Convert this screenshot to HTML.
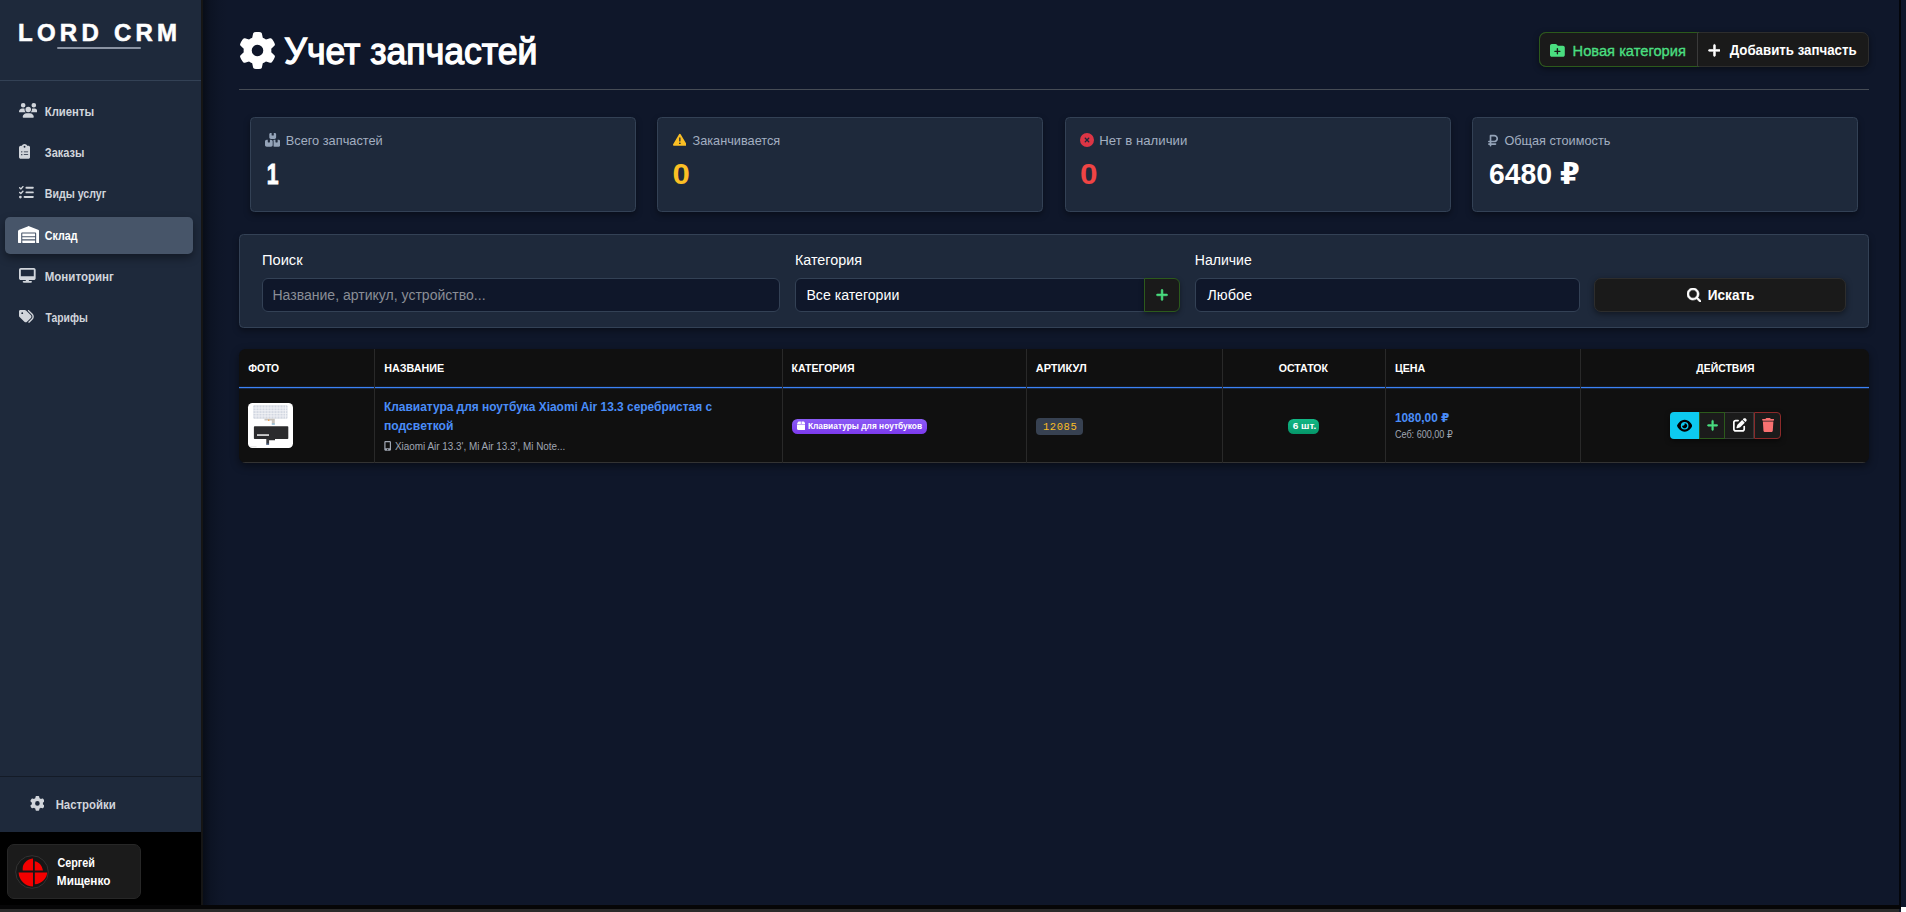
<!DOCTYPE html>
<html lang="ru">
<head>
<meta charset="utf-8">
<title>LORD CRM — Учет запчастей</title>
<style>
*{box-sizing:border-box;margin:0;padding:0}
html,body{width:1906px;height:912px;overflow:hidden}
body{background:#0f172a;color:#fff;font-family:"Liberation Sans","DejaVu Sans",sans-serif;font-size:14px;position:relative}
.abs{position:absolute}
svg{display:block;position:absolute}
.t{position:absolute;white-space:nowrap;transform-origin:0 50%;display:block}
/* ---------- sidebar ---------- */
#sb{position:absolute;left:0;top:0;width:201px;height:905px;background:#1e293b}
#sbedge{position:absolute;left:201px;top:0;width:2px;height:905px;background:#151515}
#sbshadow{position:absolute;left:203px;top:0;width:26px;height:905px;background:linear-gradient(90deg,rgba(3,6,12,.6),rgba(3,6,12,.22) 30%,rgba(3,6,12,.06) 65%,rgba(3,6,12,0))}
#logo{left:19px;top:17.8px;font-weight:700;font-size:24px;line-height:30px;letter-spacing:4.25px;color:#fff;-webkit-text-stroke:.55px #fff}
#logoline{position:absolute;left:57px;top:47px;width:84px;height:2px;background:#8a93a3;border-radius:1px}
.sbhr{position:absolute;left:0;width:201px;height:1px;background:#334155}
.nav{position:absolute;left:5px;width:188px;height:37px;border-radius:5px;color:#d1d5db;font-weight:700;font-size:13px;line-height:37px}
.nav .t{left:39.7px;top:0}
.nav.on{background:#475569;color:#fff;box-shadow:0 4px 8px rgba(0,0,0,.38)}
#userbar{position:absolute;left:0;top:832px;width:201px;height:73px;background:#000}
#usercard{position:absolute;left:7px;top:12px;width:134px;height:55px;background:#1b1b1b;border:1px solid #272727;border-radius:7px}
#usercard .t{font-weight:700;font-size:13px;line-height:18px;color:#fff}
/* ---------- main ---------- */
#h1{left:283px;top:29.7px;font-size:36px;line-height:44px;font-weight:400;color:#fff;-webkit-text-stroke:1.3px #fff}
#hr{position:absolute;left:239px;top:89px;width:1630px;height:1px;background:#464c55}
#btns{position:absolute;left:1539px;top:32px;width:330px;height:35px;background:#1a1a1a;border:1px solid #2d2d2d;border-radius:7px;box-shadow:0 2px 6px rgba(0,0,0,.45);font-size:14px;line-height:33px}
#btns .b1{position:absolute;left:-1px;top:-1px;width:160px;height:35px;border:1px solid #2c5a1c;border-right:0;border-radius:7px 0 0 7px;color:#4ade80}
#btns .b2{position:absolute;left:157px;top:-1px;width:171px;height:35px;border-left:1px solid #3a3a3a;color:#fff;font-weight:700}
.stat{position:absolute;top:117px;width:386px;height:95px;background:#1e293b;border:1px solid #334155;border-radius:4.5px;box-shadow:0 3px 6px rgba(0,0,0,.36)}
.stat .lb{top:14px;font-size:13px;line-height:18px;color:#a3afc1}
.stat .vl{top:38px;font-size:29.5px;line-height:36px;font-weight:700}
#filt{position:absolute;left:239px;top:234px;width:1630px;height:94px;background:#1e293b;border:1px solid #334155;border-radius:4.5px;box-shadow:0 3px 6px rgba(0,0,0,.36)}
.flb{top:16px;font-size:14px;line-height:18px;color:#fff}
.fin{position:absolute;top:43px;height:34px;background:#0f172a;border:1px solid #334155;border-radius:6px;font-size:14px;line-height:32px;color:#fff}
.fin .t{top:0}
/* ---------- table ---------- */
#tbl{position:absolute;left:239px;top:349px;width:1630px;height:114px;background:#101010;border-radius:6.5px;box-shadow:0 3px 8px rgba(0,0,0,.45);overflow:hidden}
#tbl .th{top:0;font-size:11.5px;line-height:38px;font-weight:700;color:#fff}
#tbl .vl{position:absolute;top:0;width:1px;height:114px;background:#292929}
#tbl .bl{position:absolute;left:0;top:37px;width:1630px;height:3px;background:linear-gradient(180deg,rgba(59,130,246,.1) 0,rgba(59,130,246,.1) 1px,#3b82f6 1px,#3b82f6 2px,rgba(59,130,246,.22) 2px,rgba(59,130,246,.22) 3px)}
#tbl .bb{position:absolute;left:0;top:113px;width:1630px;height:1px;background:#333}
#thumb{position:absolute;left:9px;top:54px;width:45px;height:45px;border-radius:4.5px;background:#fff;overflow:hidden}
.lnk{font-size:13px;line-height:19px;font-weight:700;color:#4a8df8}
.sub{font-size:10px;line-height:14px;color:#a0a7b3}
#catb{position:absolute;left:553px;top:70px;width:135px;height:15px;border-radius:5.5px;background:linear-gradient(180deg,#8b5cf6,#7c3aed);font-size:9.5px;line-height:15px;font-weight:700;color:#fff}
#art{position:absolute;left:797px;top:69px;width:47px;height:17px;border-radius:4px;background:#374151;font-family:"Liberation Mono","DejaVu Sans Mono",monospace;font-size:10.5px;line-height:17px;color:#fbbf24}
#stk{position:absolute;left:1049px;top:70px;width:31px;height:15px;border-radius:5.5px;background:linear-gradient(180deg,#12b886,#059669);font-size:9.5px;line-height:15px;font-weight:700;color:#fff}
#acts{position:absolute;left:1431px;top:63px;width:111px;height:27px;border-radius:4px;box-shadow:0 2px 5px rgba(0,0,0,.5)}
#acts div{position:absolute;top:0;height:27px}
/* per-text width calibration */
#n1{transform:translateX(-0.26px) scaleX(0.8696)}
#n2{transform:translateX(-0.25px) scaleX(0.8457)}
#n3{transform:translateX(-0.24px) scaleX(0.8160)}
#n4{transform:translateX(-0.24px) scaleX(0.8225)}
#n5{transform:translateX(-0.26px) scaleX(0.8859)}
#n6{transform:translateX(0.46px) scaleX(0.7944)}
#n7{transform:translateX(-0.36px) scaleX(0.8750)}
#u1{transform:translateX(0.42px) scaleX(0.8304)}
#u2{transform:translateX(-0.15px) scaleX(0.9051)}
#logo{transform:translateX(-1.00px) scaleX(1.0000)}
#h1{transform:translateX(1.29px) scaleX(0.9887)}
#b1t{transform:translateX(-0.40px) scaleX(1.0472)}
#b2t{transform:translateX(0.65px) scaleX(0.9489)}
#s1l{transform:translateX(-1.28px) scaleX(0.9825)}
#s1v{transform:translateX(0.78px) scaleX(0.7188)}
#s2l{transform:translateX(-0.50px) scaleX(0.9787)}
#s2v{transform:translateX(-0.45px) scaleX(1.0533)}
#s3l{transform:translateX(-1.71px) scaleX(1.0129)}
#s3v{transform:translateX(-1.07px) scaleX(1.0667)}
#s4l{transform:translateX(-0.60px) scaleX(0.9778)}
#s4v{transform:translateX(0.90px) scaleX(0.9617)}
#f1l{transform:translateX(0.00px) scaleX(1.0462)}
#f1t{transform:translateX(-1.60px) scaleX(1.0028)}
#f2l{transform:translateX(-0.10px) scaleX(1.0246)}
#f2t{transform:translateX(-0.60px) scaleX(1.0098)}
#f3l{transform:translateX(-0.20px) scaleX(1.0018)}
#f3t{transform:translateX(0.34px) scaleX(1.0364)}
#f4t{transform:translateX(-0.20px) scaleX(0.9688)}
#h1t{transform:translateX(0.20px) scaleX(0.8971)}
#h2t{transform:translateX(0.30px) scaleX(0.9344)}
#h3t{transform:translateX(0.50px) scaleX(0.9130)}
#h4t{transform:translateX(-0.30px) scaleX(0.9566)}
#h5t{transform:translateX(-0.30px) scaleX(0.9185)}
#h6t{transform:translateX(-0.10px) scaleX(0.9303)}
#h7t{transform:translateX(1.31px) scaleX(0.9077)}
#r1a{transform:translateX(0.00px) scaleX(0.9171)}
#r1b{transform:translateX(0.00px) scaleX(0.9324)}
#r1c{transform:translateX(0.00px) scaleX(0.9890)}
#cbt{transform:translateX(-1.08px) scaleX(0.8797)}
#art_t{transform:translateX(-1.10px) scaleX(1.0000)}
#stk_t{transform:translateX(-1.36px) scaleX(1.0632)}
#p1{transform:translateX(-0.10px) scaleX(0.9119)}
#p2{transform:translateX(-0.10px) scaleX(0.9078)}
</style>
</head>
<body>

<!-- ================= SIDEBAR ================= -->
<div id="sb">
  <div id="logo" class="t">LORD CRM</div>
  <div id="logoline"></div>
  <div class="sbhr" style="top:80px"></div>

  <div class="nav" style="top:93.6px"><svg width="18.50" height="14.80" viewBox="0 0 640 512" fill="currentColor" style="left:13.9px;top:9.6px"><path d="M144 0a80 80 0 1 1 0 160A80 80 0 1 1 144 0zM512 0a80 80 0 1 1 0 160A80 80 0 1 1 512 0zM0 298.700C0 239.800 47.800 192 106.700 192h42.700c15.900 0 31 3.500 44.600 9.700c-1.300 7.200-1.900 14.700-1.900 22.300c0 38.200 16.800 72.500 43.300 96c-.2 0-.4 0-.7 0H21.300C9.600 320 0 310.400 0 298.700zM405.300 320c-.2 0-.4 0-.7 0c26.600-23.500 43.300-57.800 43.300-96c0-7.600-.7-15-1.900-22.300c13.600-6.300 28.700-9.700 44.600-9.700h42.700C592.200 192 640 239.800 640 298.700c0 11.800-9.600 21.300-21.300 21.300H405.300zM224 224a96 96 0 1 1 192 0 96 96 0 1 1 -192 0zM128 485.300C128 411.700 187.700 352 261.300 352H378.700C452.300 352 512 411.700 512 485.300c0 14.700-11.900 26.700-26.700 26.700H154.700c-14.700 0-26.700-11.900-26.700-26.700z"/></svg><span class="t" id="n1" style="top:-.5px">Клиенты</span></div>
  <div class="nav" style="top:134.7px"><svg width="11.10" height="14.80" viewBox="0 0 384 512" fill="currentColor" style="left:14px;top:9.6px"><path d="M192 0c-41.800 0-77.400 26.700-90.500 64H64C28.700 64 0 92.700 0 128V448c0 35.300 28.700 64 64 64H320c35.300 0 64-28.700 64-64V128c0-35.300-28.700-64-64-64H282.500C269.400 26.700 233.800 0 192 0zm0 64a32 32 0 1 1 0 64 32 32 0 1 1 0-64zM72 272a24 24 0 1 1 48 0 24 24 0 1 1 -48 0zm104-16H304c8.800 0 16 7.200 16 16s-7.200 16-16 16H176c-8.800 0-16-7.200-16-16s7.200-16 16-16zM72 368a24 24 0 1 1 48 0 24 24 0 1 1 -48 0zm88 0c0-8.800 7.200-16 16-16H304c8.800 0 16 7.200 16 16s-7.200 16-16 16H176c-8.800 0-16-7.200-16-16z"/></svg><span class="t" id="n2" style="top:-.5px">Заказы</span></div>
  <div class="nav" style="top:175.9px"><svg width="14.80" height="14.80" viewBox="0 0 512 512" fill="currentColor" style="left:13.9px;top:9.6px"><path d="M152.100 38.200c9.900 8.900 10.700 24 1.800 33.900l-72 80c-4.400 4.900-10.600 7.800-17.200 7.900s-12.900-2.400-17.600-7L7 113C-2.300 103.600-2.300 88.400 7 79s24.600-9.400 33.900 0l22.100 22.100 55.100-61.200c8.900-9.900 24-10.700 33.900-1.800zm0 160c9.900 8.900 10.700 24 1.800 33.900l-72 80c-4.400 4.900-10.600 7.800-17.200 7.900s-12.900-2.400-17.600-7L7 273c-9.400-9.400-9.400-24.600 0-33.900s24.600-9.400 33.900 0l22.100 22.100 55.100-61.200c8.900-9.900 24-10.700 33.900-1.800zM224 96c0-17.700 14.300-32 32-32H480c17.700 0 32 14.300 32 32s-14.300 32-32 32H256c-17.700 0-32-14.300-32-32zm0 160c0-17.700 14.300-32 32-32H480c17.700 0 32 14.300 32 32s-14.300 32-32 32H256c-17.700 0-32-14.300-32-32zM160 416c0-17.700 14.300-32 32-32H480c17.700 0 32 14.300 32 32s-14.300 32-32 32H192c-17.700 0-32-14.300-32-32zM48 368a48 48 0 1 1 0 96 48 48 0 1 1 0-96z"/></svg><span class="t" id="n3" style="top:-.5px">Виды услуг</span></div>
  <div class="nav on" style="top:217px"><svg width="21.38" height="17.10" viewBox="0 0 640 512" fill="currentColor" style="left:12.9px;top:9.3px"><path d="M0 488V171.300c0-26.200 15.900-49.700 40.200-59.400L308.100 4.800c7.600-3.100 16.100-3.100 23.800 0L599.800 111.900c24.300 9.700 40.200 33.300 40.200 59.400V488c0 13.300-10.700 24-24 24H568c-13.300 0-24-10.700-24-24V224c0-17.700-14.300-32-32-32H128c-17.700 0-32 14.300-32 32V488c0 13.300-10.700 24-24 24H24c-13.300 0-24-10.700-24-24zm488 24l-336 0c-13.300 0-24-10.700-24-24V432H512l0 56c0 13.300-10.700 24-24 24zM128 400V336H512v64H128zm0-96V224H512l0 80H128z"/></svg><span class="t" id="n4">Склад</span></div>
  <div class="nav" style="top:258.1px"><svg width="16.65" height="14.80" viewBox="0 0 576 512" fill="currentColor" style="left:14px;top:9.9px"><path d="M64 0C28.700 0 0 28.700 0 64V352c0 35.300 28.700 64 64 64H240l-10.700 32H160c-17.700 0-32 14.300-32 32s14.300 32 32 32H416c17.700 0 32-14.300 32-32s-14.300-32-32-32H346.700L336 416H512c35.300 0 64-28.700 64-64V64c0-35.300-28.700-64-64-64H64zM512 64V288H64V64H512z"/></svg><span class="t" id="n5">Мониторинг</span></div>
  <div class="nav" style="top:299.3px"><svg width="14.80" height="14.80" viewBox="0 0 512 512" fill="currentColor" style="left:13.9px;top:9.6px"><path d="M345 39.100L472.800 168.400c52.400 53 52.400 138.200 0 191.200L360.800 472.900c-9.300 9.400-24.500 9.500-33.900 .2s-9.500-24.500-.2-33.900L438.600 325.900c33.900-34.300 33.900-89.400 0-123.700L310.900 72.900c-9.300-9.400-9.200-24.600 .2-33.900s24.600-9.200 33.900 .2zM0 229.500V80C0 53.500 21.500 32 48 32H197.500c17 0 33.300 6.700 45.300 18.700l168 168c25 25 25 65.500 0 90.500L277.300 442.800c-25 25-65.500 25-90.500 0l-168-168C6.700 262.700 0 246.500 0 229.500zM144 144a32 32 0 1 0 -64 0 32 32 0 1 0 64 0z"/></svg><span class="t" id="n6">Тарифы</span></div>

  <div class="sbhr" style="top:776px;background:#141b27"></div>
  <div class="nav" style="top:785.5px;left:16px;width:170px"><svg width="14.80" height="14.80" viewBox="0 0 512 512" fill="currentColor" style="left:13.5px;top:10.8px"><path d="M495.900 166.600c3.200 8.700 .5 18.400-6.400 24.600l-43.300 39.400c1.100 8.300 1.700 16.800 1.700 25.400s-.6 17.100-1.700 25.400l43.300 39.400c6.900 6.200 9.600 15.900 6.400 24.600c-4.400 11.900-9.700 23.300-15.800 34.300l-4.700 8.100c-6.600 11-14 21.400-22.100 31.200c-5.900 7.200-15.700 9.600-24.500 6.800l-55.700-17.700c-13.400 10.300-28.200 18.900-44 25.400l-12.500 57.100c-2 9.100-9 16.300-18.200 17.800c-13.800 2.300-28 3.500-42.500 3.500s-28.700-1.200-42.500-3.500c-9.200-1.500-16.200-8.700-18.200-17.800l-12.500-57.100c-15.800-6.500-30.600-15.100-44-25.400L83.100 425.900c-8.800 2.800-18.600 .3-24.500-6.800c-8.100-9.800-15.500-20.200-22.100-31.200l-4.700-8.100c-6.100-11-11.400-22.400-15.800-34.300c-3.200-8.700-.5-18.400 6.400-24.600l43.300-39.400C64.600 273.100 64 264.600 64 256s.6-17.100 1.700-25.400L22.400 191.200c-6.900-6.200-9.600-15.900-6.400-24.600c4.400-11.900 9.700-23.300 15.800-34.300l4.700-8.100c6.600-11 14-21.400 22.100-31.200c5.900-7.200 15.700-9.600 24.500-6.800l55.700 17.700c13.400-10.300 28.200-18.900 44-25.400l12.500-57.100c2-9.100 9-16.300 18.200-17.800C227.300 1.200 241.500 0 256 0s28.700 1.200 42.500 3.500c9.200 1.500 16.200 8.700 18.200 17.800l12.500 57.100c15.800 6.500 30.600 15.100 44 25.400l55.700-17.700c8.800-2.800 18.600-.3 24.500 6.800c8.100 9.800 15.500 20.200 22.100 31.200l4.700 8.100c6.100 11 11.400 22.400 15.800 34.300zM256 336a80 80 0 1 0 0-160 80 80 0 1 0 0 160z"/></svg><span class="t" id="n7">Настройки</span></div>

  <div id="userbar">
    <div id="usercard">
      <svg width="34" height="34" viewBox="0 0 34 34" style="left:7px;top:9.5px">
        <circle cx="17" cy="17" r="16.3" fill="#161616" stroke="#333" stroke-width="1"/>
        <g fill="#f40000">
          <path d="M18 15.6V3.4l-1.6.3A11.5 11.5 0 0 0 8.6 9.5c-.6 1-1 3-.9 6.1z"/>
          <path d="M19.8 15.6V6.2c3.2.3 6.6 3.3 7.6 7.2l.6 2.2z"/>
          <path d="M18 17.4v14.2C10.5 31.2 4 25.5 3.6 17.4z"/>
          <path d="M19.8 17.4h12.4c-.2 5.7-5.2 11.3-12.4 11.8z"/>
        </g>
      </svg>
      <span class="t" id="u1" style="left:48.5px;top:9px">Сергей</span>
      <span class="t" id="u2" style="left:48.5px;top:27px">Мищенко</span>
    </div>
  </div>
</div>
<div id="sbedge"></div>
<div id="sbshadow"></div>

<!-- ================= MAIN ================= -->
<svg width="37.00" height="37.00" viewBox="0 0 512 512" fill="currentColor" style="left:238.5px;top:31.8px"><path d="M495.900 166.600c3.200 8.700 .5 18.400-6.400 24.600l-43.300 39.400c1.100 8.300 1.700 16.800 1.700 25.400s-.6 17.100-1.700 25.400l43.300 39.400c6.900 6.200 9.600 15.900 6.400 24.600c-4.400 11.900-9.700 23.300-15.800 34.300l-4.700 8.100c-6.600 11-14 21.400-22.100 31.200c-5.900 7.200-15.700 9.600-24.500 6.800l-55.700-17.700c-13.400 10.300-28.200 18.900-44 25.400l-12.500 57.100c-2 9.100-9 16.300-18.200 17.800c-13.800 2.300-28 3.500-42.500 3.500s-28.700-1.200-42.500-3.500c-9.200-1.500-16.200-8.700-18.200-17.800l-12.500-57.100c-15.800-6.500-30.600-15.100-44-25.400L83.100 425.900c-8.800 2.800-18.600 .3-24.500-6.800c-8.100-9.800-15.500-20.200-22.100-31.200l-4.700-8.100c-6.100-11-11.400-22.400-15.800-34.300c-3.200-8.700-.5-18.400 6.400-24.600l43.300-39.400C64.600 273.100 64 264.600 64 256s.6-17.100 1.700-25.400L22.400 191.200c-6.900-6.200-9.600-15.900-6.400-24.600c4.400-11.900 9.700-23.300 15.800-34.300l4.700-8.100c6.600-11 14-21.400 22.100-31.200c5.900-7.200 15.700-9.600 24.500-6.800l55.700 17.700c13.400-10.300 28.200-18.900 44-25.400l12.500-57.100c2-9.100 9-16.300 18.200-17.800C227.300 1.200 241.500 0 256 0s28.700 1.200 42.500 3.500c9.200 1.500 16.200 8.700 18.200 17.800l12.500 57.100c15.800 6.500 30.600 15.100 44 25.400l55.700-17.700c8.800-2.800 18.600-.3 24.500 6.800c8.100 9.800 15.500 20.200 22.100 31.200l4.700 8.100c6.100 11 11.400 22.400 15.800 34.300zM256 336a80 80 0 1 0 0-160 80 80 0 1 0 0 160z"/></svg>
<div id="h1" class="t">Учет запчастей</div>
<div id="hr"></div>

<div id="btns">
  <div class="b1"><svg width="14.80" height="14.80" viewBox="0 0 512 512" fill="currentColor" style="left:9.8px;top:9.5px"><path d="M512 416c0 35.300-28.700 64-64 64H64c-35.300 0-64-28.700-64-64V96C0 60.700 28.700 32 64 32H192c20.100 0 39.100 9.500 51.200 25.600l19.200 25.600c6 8.100 15.500 12.800 25.600 12.800H448c35.300 0 64 28.700 64 64V416zM232 376c0 13.300 10.700 24 24 24s24-10.700 24-24V312h64c13.300 0 24-10.700 24-24s-10.700-24-24-24H280V200c0-13.300-10.700-24-24-24s-24 10.700-24 24v64H168c-13.300 0-24 10.700-24 24s10.700 24 24 24h64v64z"/></svg><span class="t" id="b1t" style="left:33px;top:1.8px;-webkit-text-stroke:.35px #4ade80">Новая категория</span></div>
  <div class="b2"><svg width="12.95" height="14.80" viewBox="0 0 448 512" fill="currentColor" style="left:9.5px;top:10.9px"><path stroke="currentColor" stroke-width="22" d="M256 80c0-17.700-14.300-32-32-32s-32 14.300-32 32V224H48c-17.700 0-32 14.300-32 32s14.300 32 32 32H192V432c0 17.700 14.300 32 32 32s32-14.300 32-32V288H400c17.700 0 32-14.300 32-32s-14.300-32-32-32H256V80z"/></svg><span class="t" id="b2t" style="left:31px;top:2px">Добавить запчасть</span></div>
</div>

<div class="stat" style="left:250px"><svg width="15.41" height="13.70" viewBox="0 0 576 512" fill="currentColor" style="left:13.8px;top:15.2px;color:#94a3b8"><path d="M248 0H208c-26.500 0-48 21.500-48 48V160c0 35.300 28.700 64 64 64H352c35.300 0 64-28.700 64-64V48c0-26.500-21.500-48-48-48H328V80c0 8.800-7.200 16-16 16H264c-8.800 0-16-7.200-16-16V0zM64 256c-35.300 0-64 28.700-64 64V448c0 35.300 28.700 64 64 64H224c35.300 0 64-28.700 64-64V320c0-35.300-28.700-64-64-64H184v80c0 8.800-7.200 16-16 16H120c-8.800 0-16-7.200-16-16V256H64zM352 512H512c35.300 0 64-28.700 64-64V320c0-35.300-28.700-64-64-64H472v80c0 8.800-7.200 16-16 16H408c-8.800 0-16-7.200-16-16V256H352c-15 0-28.800 5.100-39.700 13.800c4.900 10.400 7.700 22 7.700 34.200V464c0 12.200-2.800 23.800-7.700 34.200C323.200 506.900 337 512 352 512z"/></svg><span class="t lb" id="s1l" style="left:36px">Всего запчастей</span><span class="t vl" id="s1v" style="left:15px;color:#fff;-webkit-text-stroke:.9px #fff">1</span></div>
<div class="stat" style="left:657px"><svg width="13.70" height="13.70" viewBox="0 0 512 512" fill="currentColor" style="left:14.7px;top:15px;color:#fbbf24"><path d="M256 32c14.200 0 27.300 7.500 34.500 19.800l216 368c7.300 12.400 7.300 27.700 .2 40.100S486.300 480 472 480H40c-14.300 0-27.600-7.700-34.700-20.100s-7-27.800 .2-40.100l216-368C228.700 39.500 241.800 32 256 32zm0 128c-13.300 0-24 10.700-24 24V296c0 13.300 10.700 24 24 24s24-10.700 24-24V184c0-13.300-10.700-24-24-24zm32 224a32 32 0 1 0 -64 0 32 32 0 1 0 64 0z"/></svg><span class="t lb" id="s2l" style="left:35px">Заканчивается</span><span class="t vl" id="s2v" style="left:15px;color:#fbbf24">0</span></div>
<div class="stat" style="left:1065px"><svg width="14.00" height="14.00" viewBox="0 0 512 512" fill="currentColor" style="left:14px;top:15px;color:#dc3545"><path d="M256 512A256 256 0 1 0 256 0a256 256 0 1 0 0 512zM175 175c9.400-9.400 24.600-9.400 33.900 0l47 47 47-47c9.400-9.400 24.600-9.400 33.900 0s9.400 24.600 0 33.900l-47 47 47 47c9.400 9.400 9.400 24.600 0 33.900s-24.600 9.400-33.900 0l-47-47-47 47c-9.400 9.400-24.600 9.400-33.900 0s-9.400-24.600 0-33.900l47-47-47-47c-9.400-9.400-9.400-24.600 0-33.900z"/></svg><span class="t lb" id="s3l" style="left:35px">Нет в наличии</span><span class="t vl" id="s3v" style="left:15px;color:#ef4444">0</span></div>
<div class="stat" style="left:1472px"><svg width="10.05" height="13.40" viewBox="0 0 384 512" fill="currentColor" style="left:14.7px;top:15.6px;color:#94a3b8"><path d="M96 32C78.300 32 64 46.300 64 64V256H32c-17.700 0-32 14.300-32 32s14.300 32 32 32H64v32H32c-17.700 0-32 14.300-32 32s14.300 32 32 32H64v32c0 17.700 14.300 32 32 32s32-14.300 32-32V416H288c17.700 0 32-14.300 32-32s-14.300-32-32-32H128V320H240c79.500 0 144-64.500 144-144s-64.500-144-144-144H96zM240 256H128V96H240c44.200 0 80 35.800 80 80s-35.800 80-80 80z"/></svg><span class="t lb" id="s4l" style="left:32px">Общая стоимость</span><span class="t vl" id="s4v" style="left:15px;color:#fff">6480 ₽</span></div>

<div id="filt">
  <span class="t flb" id="f1l" style="left:22px">Поиск</span>
  <div class="fin" style="left:22px;width:518px;color:#8a8e96"><span class="t" id="f1t" style="left:11px">Название, артикул, устройство...</span></div>
  <span class="t flb" id="f2l" style="left:555px">Категория</span>
  <div class="fin" style="left:555px;width:351px;border-radius:6px 0 0 6px"><span class="t" id="f2t" style="left:11px">Все категории</span></div>
  <div class="abs" style="left:904px;top:43px;width:36px;height:34px;background:#1a1a1a;border:1px solid #2c5a1c;border-radius:0 6px 6px 0;box-shadow:0 2px 5px rgba(0,0,0,.4)"><svg width="12.08" height="13.80" viewBox="0 0 448 512" fill="currentColor" style="left:11px;top:8.6px;color:#4ade80"><path stroke="currentColor" stroke-width="22" d="M256 80c0-17.700-14.300-32-32-32s-32 14.300-32 32V224H48c-17.700 0-32 14.300-32 32s14.300 32 32 32H192V432c0 17.700 14.300 32 32 32s32-14.300 32-32V288H400c17.700 0 32-14.300 32-32s-14.300-32-32-32H256V80z"/></svg></div>
  <span class="t flb" id="f3l" style="left:955px">Наличие</span>
  <div class="fin" style="left:955px;width:385px"><span class="t" id="f3t" style="left:11px">Любое</span></div>
  <div class="abs" style="left:1354px;top:43px;width:252px;height:34px;background:#1a1a1a;border:1px solid #2d2d2d;border-radius:7px;box-shadow:0 2px 6px rgba(0,0,0,.45);font-size:14px;line-height:32px;font-weight:700"><svg width="14.80" height="14.80" viewBox="0 0 512 512" fill="currentColor" style="left:91.5px;top:8.7px"><path stroke="currentColor" stroke-width="22" d="M416 208c0 45.900-14.900 88.300-40 122.700L502.600 457.400c12.500 12.500 12.500 32.800 0 45.300s-32.800 12.500-45.300 0L330.700 376c-34.400 25.200-76.800 40-122.700 40C93.100 416 0 322.900 0 208S93.100 0 208 0S416 93.100 416 208zM208 352a144 144 0 1 0 0-288 144 144 0 1 0 0 288z"/></svg><span class="t" id="f4t" style="left:113px;top:0">Искать</span></div>
</div>

<div id="tbl">
  <div class="bl"></div>
  <div class="bb"></div>
  <div class="vl" style="left:135px"></div>
  <div class="vl" style="left:543px"></div>
  <div class="vl" style="left:787px"></div>
  <div class="vl" style="left:983px"></div>
  <div class="vl" style="left:1146px"></div>
  <div class="vl" style="left:1341px"></div>
  <span class="t th" id="h1t" style="left:9px">ФОТО</span>
  <span class="t th" id="h2t" style="left:145px">НАЗВАНИЕ</span>
  <span class="t th" id="h3t" style="left:552px">КАТЕГОРИЯ</span>
  <span class="t th" id="h4t" style="left:797px">АРТИКУЛ</span>
  <span class="t th" id="h5t" style="left:1040px">ОСТАТОК</span>
  <span class="t th" id="h6t" style="left:1156px">ЦЕНА</span>
  <span class="t th" id="h7t" style="left:1456px">ДЕЙСТВИЯ</span>

  <div id="thumb">
    <svg width="45" height="45" viewBox="0 0 45 45" style="left:0;top:0">
      <rect x="5.3" y="2.3" width="34.2" height="13.4" rx="1" fill="#d2d7e1"/>
      <g stroke="#fff" stroke-width=".8" opacity=".75"><path d="M5.3 5h34.2M5.3 7.7h34.2M5.3 10.4h34.2M5.3 13h34.2"/><path d="M8 2.3v13.4M11 2.3v13.4M14 2.3v13.4M17 2.3v13.4M20 2.3v13.4M23 2.3v13.4M26 2.3v13.4M29 2.3v13.4M32 2.3v13.4M35 2.3v13.4M37.5 2.3v13.4"/></g>
      <path d="M16.5 15.7h10.3v5.7h-3v-4h-7.3z" fill="#c9c4bd"/><rect x="20" y="16.6" width="1.4" height="1.3" fill="#f59e42"/><rect x="23.8" y="20.6" width="3" height=".9" fill="#6cb6e6"/>
      <rect x="5.9" y="23.3" width="34.4" height="12.8" rx=".8" fill="#2b2b2d"/>
      <rect x="9" y="31.3" width="12" height="1.5" fill="#f3f3f3"/>
      <path d="M18.3 36.1h2.8v5.6h-2.8z" fill="#3a3a3e"/><path d="M21 36.1h6v1.2h-6z" fill="#2b2b2d"/><rect x="18.5" y="40.6" width="2.4" height="1" fill="#5a7fb5"/>
      <rect x="2.5" y="43.3" width="6" height="1" fill="#e3e3e3"/>
    </svg>
  </div>

  <span class="t lnk" id="r1a" style="left:145px;top:48px">Клавиатура для ноутбука Xiaomi Air 13.3 серебристая с</span>
  <span class="t lnk" id="r1b" style="left:145px;top:67px">подсветкой</span>
  <svg width="7.35" height="9.80" viewBox="0 0 384 512" fill="currentColor" style="left:145px;top:92px;color:#a0a7b3"><path d="M16 64C16 28.700 44.700 0 80 0H304c35.300 0 64 28.700 64 64V448c0 35.300-28.700 64-64 64H80c-35.300 0-64-28.700-64-64V64zM224 448a32 32 0 1 0 -64 0 32 32 0 1 0 64 0zM304 64H80V384H304V64z"/></svg>
  <span class="t sub" id="r1c" style="left:156px;top:91px">Xiaomi Air 13.3', Mi Air 13.3', Mi Note...</span>

  <div id="catb"><svg width="8.40" height="9.60" viewBox="0 0 448 512" fill="currentColor" style="left:5px;top:1.7px"><path d="M50.700 58.500L0 160H208V32H93.700C75.500 32 58.900 42.300 50.700 58.500zM240 160H448L397.300 58.500C389.100 42.300 372.500 32 354.300 32H240V160zm208 32H0V416c0 35.300 28.700 64 64 64H384c35.300 0 64-28.700 64-64V192z"/></svg><span class="t" id="cbt" style="left:17px;top:-1px">Клавиатуры для ноутбуков</span></div>
  <div id="art"><span class="t" id="art_t" style="left:8px;top:.8px;letter-spacing:.6px">12085</span></div>
  <div id="stk"><span class="t" id="stk_t" style="left:6px;top:-1px">6 шт.</span></div>
  <span class="t lnk" id="p1" style="left:1156px;top:60px;line-height:18px">1080,00 ₽</span>
  <span class="t sub" id="p2" style="left:1156px;top:79px">Себ: 600,00 ₽</span>

  <div id="acts">
    <div style="left:0;width:29px;background:#0dcaf0;border-radius:4px 0 0 4px"><svg width="15.30" height="13.60" viewBox="0 0 576 512" fill="currentColor" style="left:7px;top:6.8px;color:#000"><path d="M288 32c-80.800 0-145.500 36.800-192.600 80.600C48.600 156 17.300 208 2.500 243.700c-3.300 7.900-3.300 16.700 0 24.600C17.300 304 48.600 356 95.400 399.400C142.500 443.200 207.200 480 288 480s145.500-36.800 192.600-80.600c46.800-43.500 78.100-95.400 93-131.100c3.300-7.900 3.300-16.700 0-24.600c-14.900-35.700-46.200-87.700-93-131.100C433.500 68.800 368.800 32 288 32zM144 256a144 144 0 1 1 288 0 144 144 0 1 1 -288 0zm144-64c0 35.300-28.700 64-64 64c-7.100 0-13.900-1.200-20.300-3.300c-5.500-1.800-11.900 1.600-11.700 7.400c.3 6.900 1.300 13.800 3.200 20.700c13.700 51.200 66.400 81.600 117.600 67.900s81.600-66.400 67.900-117.600c-11.100-41.500-47.800-69.400-88.600-71.100c-5.800-.2-9.200 6.100-7.400 11.700c2.100 6.400 3.300 13.200 3.300 20.300z"/></svg></div>
    <div style="left:29px;width:26px;background:#1b1b1b;border:1px solid #2c5a1c"><svg width="11.20" height="12.80" viewBox="0 0 448 512" fill="currentColor" style="left:7px;top:6.1px;color:#4ade80"><path stroke="currentColor" stroke-width="22" d="M256 80c0-17.700-14.300-32-32-32s-32 14.300-32 32V224H48c-17.700 0-32 14.300-32 32s14.300 32 32 32H192V432c0 17.700 14.300 32 32 32s32-14.300 32-32V288H400c17.700 0 32-14.300 32-32s-14.300-32-32-32H256V80z"/></svg></div>
    <div style="left:55px;width:29px;background:#1b1b1b;border:1px solid #383838;border-left:0"><svg width="13.80" height="13.80" viewBox="0 0 512 512" fill="currentColor" style="left:8px;top:5.2px;color:#fff"><path d="M471.600 21.700c-21.900-21.900-57.300-21.900-79.200 0L362.300 51.700l97.900 97.900 30.100-30.100c21.900-21.900 21.900-57.300 0-79.200L471.600 21.700zm-299.200 220c-6.100 6.100-10.800 13.600-13.500 21.900l-29.600 88.800c-2.900 8.600-.6 18.100 5.800 24.600s15.900 8.700 24.600 5.800l88.800-29.600c8.200-2.700 15.700-7.400 21.900-13.500L437.700 172.300 339.700 74.300 172.400 241.700zM96 64C43 64 0 107 0 160V416c0 53 43 96 96 96H352c53 0 96-43 96-96V320c0-17.700-14.300-32-32-32s-32 14.300-32 32v96c0 17.700-14.300 32-32 32H96c-17.700 0-32-14.300-32-32V160c0-17.700 14.300-32 32-32h96c17.700 0 32-14.300 32-32s-14.300-32-32-32H96z"/></svg></div>
    <div style="left:84px;width:27px;background:#1b1b1b;border:1px solid #8c2a2a;border-radius:0 4px 4px 0"><svg width="12.25" height="14.00" viewBox="0 0 448 512" fill="currentColor" style="left:6.5px;top:5.3px;color:#f87171"><path d="M135.200 17.700L128 32H32C14.300 32 0 46.300 0 64S14.300 96 32 96H416c17.700 0 32-14.300 32-32s-14.300-32-32-32H320l-7.200-14.300C307.400 6.800 296.300 0 284.200 0H163.800c-12.100 0-23.200 6.800-28.600 17.700zM416 128H32L53.200 467c1.600 25.300 22.600 45 47.900 45H346.900c25.300 0 46.300-19.700 47.900-45L416 128z"/></svg></div>
  </div>
</div>

<!-- ================= scrollbars ================= -->
<div class="abs" style="left:1899px;top:0;width:2px;height:909px;background:#04060b"></div>
<div class="abs" style="left:0;top:905px;width:1901px;height:4px;background:#060607"></div>
<div class="abs" style="left:0;top:909px;width:1899px;height:3px;background:#2a2a2a"></div>
<div class="abs" style="left:1901px;top:907px;width:5px;height:5px;background:#fff"></div>

</body>
</html>
